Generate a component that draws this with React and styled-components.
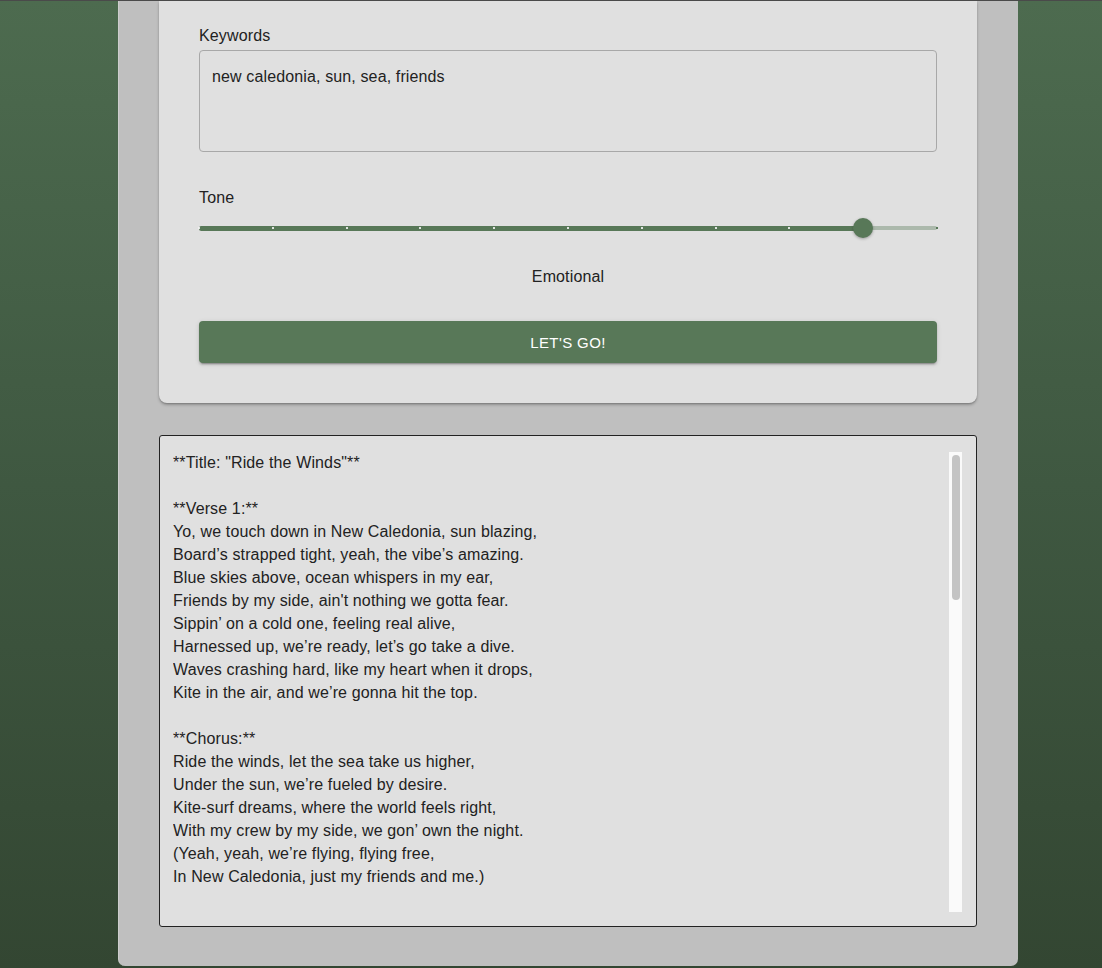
import React from "react";
import styled, { createGlobalStyle } from "styled-components";

const Global = createGlobalStyle`
  html, body { margin: 0; padding: 0; }
  body {
    min-height: 968px;
    background: linear-gradient(180deg, #4d6b4f 0%, #3f5841 50%, #334632 100%);
    border-top: 1px solid #4a4a4a;
    font-family: "Liberation Sans", Arial, Helvetica, sans-serif;
    color: #222;
    overflow: hidden;
  }
`;

const Page = styled.div`
  display: flex;
  padding-left: 118px;
  height: 967px;
`;

const Panel = styled.main`
  width: 900px;
  box-sizing: border-box;
  height: 965px;
  background: #bfbfbf;
  border-left: 1px solid #cdcdcd;
  border-radius: 0 0 7px 7px;
  padding: 0 41px 0 40px;
  display: flex;
  flex-direction: column;
  gap: 32px;
  letter-spacing: 0.13px;
`;

const Card = styled.section`
  background: #e0e0e0;
  border-radius: 0 0 8px 8px;
  box-shadow: 0 2px 3px rgba(0, 0, 0, 0.25), 0 1px 1px rgba(0, 0, 0, 0.12);
  padding: 25px 40px 40px;
  display: flex;
  flex-direction: column;
`;

const Label = styled.label`
  font-size: 16px;
  line-height: 19px;
  color: #222;
  margin-bottom: ${(p) => p.$mb || 5}px;
  margin-top: ${(p) => p.$mt || 0}px;
`;

const TextArea = styled.div`
  box-sizing: border-box;
  height: 102px;
  border: 1px solid #a8a8a8;
  border-radius: 4px;
  padding: 16px 12px;
  font-size: 16px;
  line-height: 19px;
  color: #222;
`;

const SliderRoot = styled.div`
  position: relative;
  height: 22px;
  margin-top: 5px;
`;

const Rail = styled.div`
  position: absolute;
  left: 0;
  right: 0;
  top: 9px;
  height: 4px;
  border-radius: 2px;
  background: #587858;
  opacity: 0.38;
`;

const TrackFill = styled.div`
  position: absolute;
  left: 0;
  top: 8.5px;
  height: 5px;
  border-radius: 3px;
  background: #587858;
`;

const Mark = styled.span`
  position: absolute;
  top: 10px;
  width: 2px;
  height: 2px;
  margin-left: -1px;
  background: ${(p) => (p.$active ? "rgba(240,240,240,0.9)" : "#587858")};
`;

const Thumb = styled.span`
  position: absolute;
  top: 1px;
  width: 20px;
  height: 20px;
  margin-left: -10px;
  border-radius: 50%;
  background: #587858;
  box-shadow: 0 1px 3px rgba(0, 0, 0, 0.3);
`;

const ValueText = styled.div`
  text-align: center;
  font-size: 16px;
  line-height: 19px;
  margin-top: 28px;
`;

const Button = styled.button`
  margin-top: 35px;
  height: 42px;
  border: none;
  border-radius: 4px;
  background: #587858;
  color: #fff;
  font-family: "Liberation Sans", Arial, sans-serif;
  font-size: 15px;
  letter-spacing: 0.4px;
  text-transform: uppercase;
  box-shadow: 0 3px 1px -2px rgba(0, 0, 0, 0.2), 0 2px 2px rgba(0, 0, 0, 0.14),
    0 1px 5px rgba(0, 0, 0, 0.12);
  cursor: pointer;
`;

const Output = styled.section`
  box-sizing: border-box;
  height: 492px;
  background: #e0e0e0;
  border: 1px solid #222;
  border-radius: 3px;
  padding: 16px 14px 14px 13px;
  display: flex;
  gap: 8px;
`;

const Lyrics = styled.div`
  flex: 1;
  overflow: hidden;
  white-space: pre-wrap;
  font-size: 16px;
  line-height: 23px;
  margin-top: -1px;
  color: #222;
`;

const ScrollTrack = styled.div`
  width: 13px;
  flex: none;
  background: #fafafa;
  padding-top: 3px;
  box-sizing: border-box;
  display: flex;
  justify-content: center;
`;

const ScrollThumb = styled.div`
  width: 8px;
  height: 145px;
  border-radius: 4px;
  background: #c4c4c4;
`;

const lyrics = `**Title: "Ride the Winds"**

**Verse 1:**
Yo, we touch down in New Caledonia, sun blazing,
Board’s strapped tight, yeah, the vibe’s amazing.
Blue skies above, ocean whispers in my ear,
Friends by my side, ain't nothing we gotta fear.
Sippin’ on a cold one, feeling real alive,
Harnessed up, we’re ready, let’s go take a dive.
Waves crashing hard, like my heart when it drops,
Kite in the air, and we’re gonna hit the top.

**Chorus:**
Ride the winds, let the sea take us higher,
Under the sun, we’re fueled by desire.
Kite-surf dreams, where the world feels right,
With my crew by my side, we gon’ own the night.
(Yeah, yeah, we’re flying, flying free,
In New Caledonia, just my friends and me.)`;

const MAX = 10;
const VALUE = 9;

function Slider() {
  const pct = (VALUE / MAX) * 100;
  return (
    <SliderRoot>
      <Rail />
      <TrackFill style={{ width: `${pct}%` }} />
      {Array.from({ length: MAX + 1 }, (_, i) => (
        <Mark
          key={i}
          $active={i < VALUE}
          style={{ left: `${(i / MAX) * 100}%` }}
        />
      ))}
      <Thumb style={{ left: `${pct}%` }} />
    </SliderRoot>
  );
}

export default function App() {
  return (
    <>
      <Global />
      <Page>
        <Panel>
          <Card>
            <Label>Keywords</Label>
            <TextArea>new caledonia, sun, sea, friends</TextArea>
            <Label $mt={36} $mb={0}>
              Tone
            </Label>
            <Slider />
            <ValueText>Emotional</ValueText>
            <Button>Let's go!</Button>
          </Card>
          <Output>
            <Lyrics>{lyrics}</Lyrics>
            <ScrollTrack>
              <ScrollThumb />
            </ScrollTrack>
          </Output>
        </Panel>
      </Page>
    </>
  );
}
